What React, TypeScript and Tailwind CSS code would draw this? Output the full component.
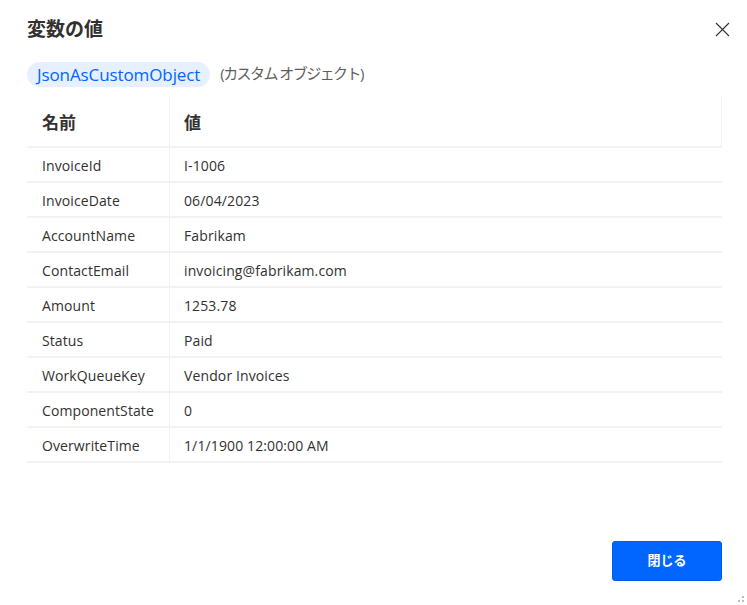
import React from "react";

const rows: [string, string][] = [
  ["InvoiceId", "I-1006"],
  ["InvoiceDate", "06/04/2023"],
  ["AccountName", "Fabrikam"],
  ["ContactEmail", "invoicing@fabrikam.com"],
  ["Amount", "1253.78"],
  ["Status", "Paid"],
  ["WorkQueueKey", "Vendor Invoices"],
  ["ComponentState", "0"],
  ["OverwriteTime", "1/1/1900 12:00:00 AM"],
];

const font = "font-['Open_Sans','Noto_Sans_CJK_JP',sans-serif]";

export default function App() {
  return (
    <div className={`relative flex h-[605px] w-[747px] flex-col overflow-hidden bg-white pl-[27px] pr-[25px] text-[#323130] ${font}`}>
      <div className="flex h-[62px] items-start justify-between">
        <h1 className="mt-[15px] text-[19px] font-semibold leading-[28px] text-[#323130]">変数の値</h1>
        <button className="mt-[21px] mr-[-8px] flex h-4 w-4 items-center justify-center text-[#323130]" aria-label="閉じる">
          <svg width="15" height="15" viewBox="0 0 15 15" fill="none" stroke="currentColor" strokeWidth="1.1">
            <path d="M1 1L14 14M14 1L1 14" />
          </svg>
        </button>
      </div>

      <div className="flex h-[25px] items-center">
        <span className="flex h-[25px] items-center rounded-full bg-[#e6f0ff] px-[10px] text-[17px] tracking-[-0.1px] text-[#0066ff]">
          JsonAsCustomObject
        </span>
        <span className="ml-[10px] mb-[3px] text-[15px] tracking-[-1.55px] text-[#605e5c]">(カスタム オブジェクト)</span>
      </div>

      <div className="mt-[11px] flex h-[50px] border-b-2 border-[#f3f2f1] border-r border-r-[#f3f2f1]">
        <div className="flex w-[143px] items-center border-r border-[#f3f2f1] pt-[2px] pl-[15px] text-[17px] font-semibold">名前</div>
        <div className="flex flex-1 items-center pt-[2px] pl-[14px] text-[17px] font-semibold">値</div>
      </div>

      {rows.map(([name, value]) => (
        <div key={name} className="flex h-[35px] border-b-2 border-[#f3f2f1] text-[14px] leading-[20px] text-[#323130]">
          <div className="flex w-[143px] items-center border-r border-[#f3f2f1] pt-[2px] pl-[15px] tracking-[0.1px]">{name}</div>
          <div className="flex flex-1 items-center pt-[2px] pl-[14px] tracking-[0.12px]">{value}</div>
        </div>
      ))}

      <div className="mt-auto mb-[24px] flex justify-end">
        <button className="flex h-[40px] w-[110px] items-center justify-center rounded-[3px] border border-[#005ce6] bg-[#0066ff] text-[13px] font-semibold text-white">
          閉じる
        </button>
      </div>

      <svg className="absolute bottom-[2px] right-[2px]" width="8" height="8" viewBox="0 0 8 8" fill="#b8bcc4" aria-hidden="true">
        <rect x="5" y="1" width="2" height="2" />
        <rect x="5" y="5" width="2" height="2" />
        <rect x="1" y="5" width="2" height="2" />
      </svg>
    </div>
  );
}
